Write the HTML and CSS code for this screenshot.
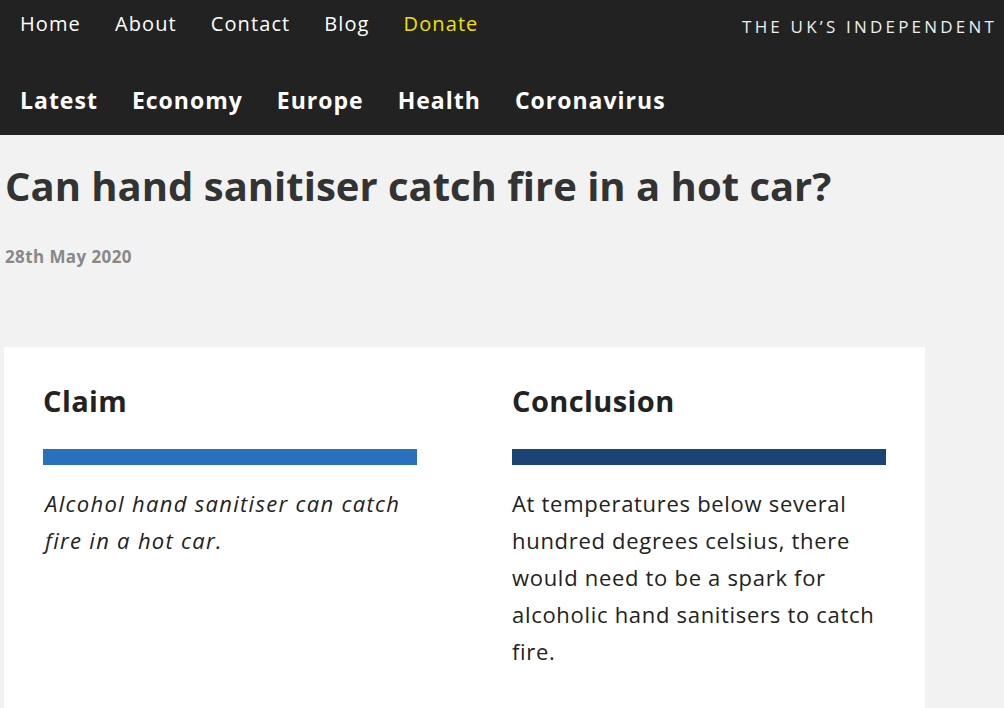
FILE: index.html
```html
<!DOCTYPE html>
<html>
<head>
  <title>Can hand sanitiser catch fire in a hot car?</title>
  <link rel="stylesheet" href="styles.css">
</head>
<body>
  <header class="site-header">
    <div class="top-row">
      <nav class="top-nav">
        <a href="#">Home</a>
        <a href="#">About</a>
        <a href="#">Contact</a>
        <a href="#">Blog</a>
        <a href="#" class="donate">Donate</a>
      </nav>
      <div class="tagline">THE UK’S INDEPENDENT</div>
    </div>
    <nav class="topic-nav">
      <a href="#">Latest</a>
      <a href="#">Economy</a>
      <a href="#">Europe</a>
      <a href="#">Health</a>
      <a href="#">Coronavirus</a>
    </nav>
  </header>

  <main class="article">
    <h1>Can hand sanitiser catch fire in a hot car?</h1>
    <p class="date">28th May 2020</p>

    <div class="verdict">
      <div class="verdict-col">
        <h2>Claim</h2>
        <div class="bar claim-bar"></div>
        <p class="claim-text">Alcohol hand sanitiser can catch fire in a hot car.</p>
      </div>
      <div class="verdict-col">
        <h2>Conclusion</h2>
        <div class="bar conclusion-bar"></div>
        <p>At temperatures below several hundred degrees celsius, there would need to be a spark for alcoholic hand sanitisers to catch fire.</p>
      </div>
    </div>
  </main>
</body>
</html>
```

FILE: styles.css
```css
body {
  margin: 0;
  font-family: "Open Sans", sans-serif;
  background-color: #f2f2f2;
  color: #222;
  overflow: hidden;
}

a {
  color: white;
  text-decoration: none;
}

.site-header {
  background-color: #222;
  height: 135px;
  padding: 0 7px 0 20px;
  box-sizing: border-box;
}

.top-row {
  display: flex;
  justify-content: space-between;
  align-items: center;
  height: 46px;
}

.top-nav {
  display: flex;
  gap: 34px;
  font-size: 20px;
  letter-spacing: 1.1px;
}

.top-nav .donate {
  color: #f0e100;
}

.tagline {
  color: #eee;
  font-size: 17px;
  letter-spacing: 3.2px;
  margin-top: 6px;
}

.topic-nav {
  display: flex;
  gap: 34px;
  font-size: 23px;
  font-weight: 700;
  letter-spacing: 1px;
  padding-top: 38px;
}

.article {
  padding: 0 0 0 5px;
}

h1 {
  margin: 0;
  padding-top: 25px;
  font-size: 40px;
  font-weight: 700;
  color: #333;
  line-height: 52px;
}

.date {
  margin: 0;
  padding-top: 33px;
  font-size: 17px;
  font-weight: 700;
  letter-spacing: 0.4px;
  color: #888;
}

.verdict {
  display: grid;
  grid-template-columns: 374px 374px;
  column-gap: 95px;
  background-color: white;
  width: 921px;
  box-sizing: border-box;
  margin-top: 79px;
  margin-left: -1px;
  padding: 32px 39px 40px;
  min-height: 400px;
}

.verdict h2 {
  margin: 0;
  font-size: 29px;
  font-weight: 700;
  letter-spacing: 0.4px;
  line-height: 44px;
}

.bar {
  height: 16px;
  margin-top: 26px;
}

.claim-bar {
  background-color: #2a70bd;
}

.conclusion-bar {
  background-color: #1a4476;
}

.verdict-col p {
  margin: 20px 0 0;
  font-size: 22px;
  letter-spacing: 0.7px;
  line-height: 37px;
}

.verdict-col .claim-text {
  font-style: italic;
  letter-spacing: 1.3px;
  padding-left: 2px;
}
```
